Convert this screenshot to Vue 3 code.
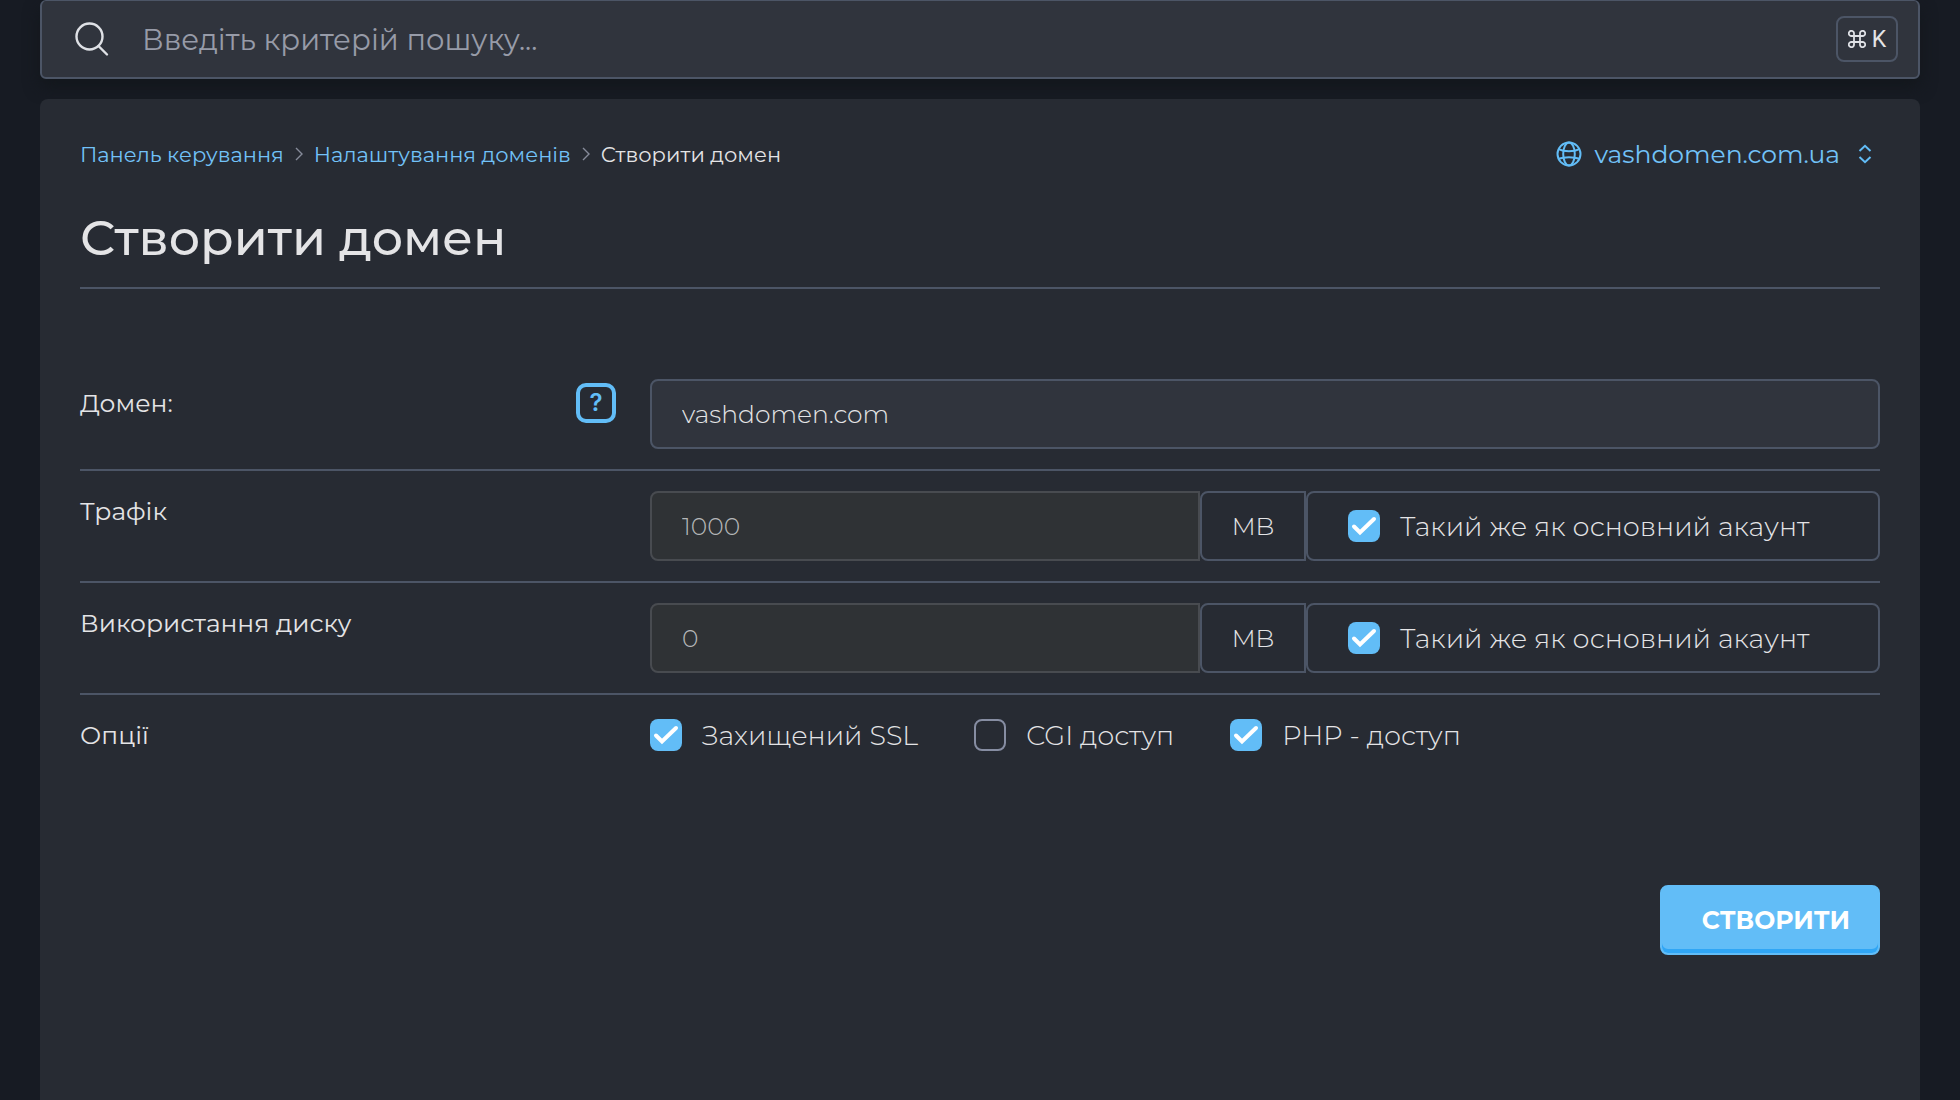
<template>
  <div class="page">
    <form class="search" role="search" @submit.prevent>
      <label for="search" class="search-icon" aria-label="Пошук">
        <svg width="36" height="36" viewBox="0 0 36 36" fill="none" stroke="#dfe1e6" stroke-width="2.4" stroke-linecap="round">
          <circle cx="15.5" cy="15.5" r="13" />
          <path d="M24.5 25 L33 33.500" />
        </svg>
      </label>
      <input id="search" v-model="query" type="text" placeholder="Введіть критерій пошуку..." />
      <kbd class="shortcut">
        <svg width="18" height="18" viewBox="0 0 18 18" fill="none" stroke="#dfe1e6" stroke-width="1.8">
          <path d="M6 6H12V12H6Z M6 6H3.6A2.6 2.6 0 1 1 6 3.6Z M12 6V3.6A2.6 2.6 0 1 1 14.4 6Z M12 12H14.4A2.6 2.6 0 1 1 12 14.4Z M6 12V14.4A2.6 2.6 0 1 1 3.6 12Z" />
        </svg>
        K
      </kbd>
    </form>

    <main class="panel">
      <div class="top">
        <nav class="crumbs">
          <template v-for="crumb in crumbs" :key="crumb">
            <a href="#">{{ crumb }}</a>
            <svg width="8" height="14" viewBox="0 0 8 14" fill="none" stroke="#868b9a" stroke-width="1.4">
              <path d="M1 1L7 7L1 13" />
            </svg>
          </template>
          <span>Створити домен</span>
        </nav>
        <button type="button" class="domain-switch">
          <svg width="26" height="26" viewBox="0 0 26 26" fill="none" stroke="currentColor" stroke-width="2">
            <circle cx="13" cy="13" r="11.5" />
            <ellipse cx="13" cy="13" rx="5.8" ry="11.5" />
            <path d="M2.5 8.2C8 11 18 11 23.5 8.2M2.5 17.8C8 15.6 18 15.6 23.5 17.8" />
          </svg>
          <span>vashdomen.com.ua</span>
          <svg class="updown" width="14" height="20" viewBox="0 0 14 20" fill="none" stroke="currentColor" stroke-width="2">
            <path d="M1.500 7L7 1.800L12.500 7M1.500 13L7 18.200L12.500 13" />
          </svg>
        </button>
      </div>

      <h1>Створити домен</h1>

      <form class="form" @submit.prevent>
        <div class="row">
          <div class="name">
            <label for="domain">Домен:</label>
            <button type="button" class="help">?</button>
          </div>
          <input id="domain" v-model="domain" class="field" type="text" />
        </div>

        <div v-for="limit in limits" :key="limit.id" class="row">
          <div class="name">
            <label :for="limit.id">{{ limit.label }}</label>
          </div>
          <div class="group">
            <input :id="limit.id" v-model="limit.value" class="field" type="text" :disabled="limit.same" />
            <span class="unit">MB</span>
            <label class="check boxed">
              <input v-model="limit.same" type="checkbox" />
              Такий же як основний акаунт
            </label>
          </div>
        </div>

        <div class="row options-row">
          <div class="name" id="options-name">Опції</div>
          <div class="options" role="group" aria-labelledby="options-name">
            <label v-for="option in options" :key="option.label" class="check">
              <input v-model="option.on" type="checkbox" />
              {{ option.label }}
            </label>
          </div>
        </div>

        <div class="actions">
          <button type="submit" class="submit">СТВОРИТИ</button>
        </div>
      </form>
    </main>
  </div>
</template>

<script setup>
import { ref } from 'vue';

const query = ref('');
const domain = ref('vashdomen.com');

const crumbs = ['Панель керування', 'Налаштування доменів'];

const limits = ref([
  { id: 'traffic', label: 'Трафік', value: '1000', same: true },
  { id: 'disk', label: 'Використання диску', value: '0', same: true }
]);

const options = ref([
  { label: 'Захищений SSL', on: true },
  { label: 'CGI доступ', on: false },
  { label: 'PHP - доступ', on: true }
]);
</script>

<style>
html, body {
  margin: 0;
  background: #171b23;
}
</style>

<style scoped>
.page {
  display: flex;
  flex-direction: column;
  gap: 20px;
  min-height: 100vh;
  padding: 0 40px;
  box-sizing: border-box;
  color: #e4e4e6;
  font-family: Montserrat, Inter, sans-serif;
  font-size: 25px;
  font-weight: 400;
}

.page * {
  box-sizing: border-box;
}

input, button, kbd {
  font: inherit;
  color: inherit;
}

a {
  color: #72c2f8;
  text-decoration: none;
}

/* Search bar */
.search {
  display: flex;
  align-items: center;
  height: 79px;
  padding: 0 20px 0 32px;
  background: #30343d;
  border: 2px solid #4c5566;
  border-top-width: 1px;
  border-radius: 6px;
  box-shadow: 0 8px 16px #13171c;
}

.search-icon {
  display: flex;
}

.search input {
  flex: 1;
  min-width: 0;
  padding: 0 32px;
  border: 0;
  outline: 0;
  background: none;
  font-size: 29px;
}

.search input::placeholder {
  color: #979ba8;
  opacity: 1;
}

.shortcut {
  display: flex;
  align-items: center;
  justify-content: center;
  gap: 6px;
  width: 62px;
  height: 46px;
  border: 2px solid #4c5566;
  border-radius: 8px;
  font-family: Roboto, sans-serif;
  font-size: 23px;
}

/* Panel */
.panel {
  flex: 1;
  padding: 35px 40px 40px;
  background: #272b33;
  border-radius: 8px 8px 0 0;
}

.top {
  display: flex;
  align-items: center;
  justify-content: space-between;
  height: 40px;
}

.crumbs {
  display: flex;
  align-items: center;
  gap: 11px;
  font-size: 21px;
}

.domain-switch {
  display: flex;
  align-items: center;
  gap: 12px;
  padding: 0 8px;
  border: 0;
  background: none;
  color: #62bdf7;
}

.domain-switch span {
  color: #72c2f8;
}

.updown {
  margin-left: 6px;
}

h1 {
  margin: 30px 0 0;
  padding-bottom: 15px;
  border-bottom: 2px solid #4c5566;
  font-size: 49px;
  line-height: 68px;
  font-weight: 500;
}

/* Form */
.form {
  padding-top: 70px;
}

.row {
  display: grid;
  grid-template-columns: 536px 1fr;
  column-gap: 34px;
  padding: 20px 0;
  border-bottom: 2px solid #4c5566;
}

.options-row {
  border-bottom: 0;
}

.name {
  display: flex;
  align-items: center;
  justify-content: space-between;
  height: 40px;
}

.row:first-child .name {
  margin-top: 4px;
}

.help {
  width: 40px;
  height: 40px;
  padding: 0;
  border: 4px solid #62bdf7;
  border-radius: 10px;
  background: none;
  color: #62bdf7;
  font-family: Inter, sans-serif;
  font-size: 24px;
  font-weight: 600;
  line-height: 32px;
}

.field {
  width: 100%;
  min-width: 0;
  height: 70px;
  padding: 0 30px;
  border: 2px solid #4c5566;
  border-radius: 8px;
  outline: 0;
  background: #30343d;
  font-weight: 300;
}

.field:disabled {
  border-color: #484b50;
  background: #2f3235;
  color: #b4b6b8;
}

.group {
  display: grid;
  grid-template-columns: 1fr 106px 574px;
}

.group .field {
  border-radius: 8px 0 0 8px;
}

.unit {
  display: flex;
  align-items: center;
  justify-content: center;
  border: 2px solid #4c5566;
  border-radius: 8px 0 0 8px;
  font-weight: 300;
}

.check {
  display: flex;
  align-items: center;
  gap: 20px;
  font-size: 27px;
  font-weight: 300;
  white-space: nowrap;
}

.check input {
  flex: none;
  width: 32px;
  height: 32px;
  margin: 0;
  appearance: none;
  border: 2px solid #868da2;
  border-radius: 8px;
}

.check input:checked {
  border: 0;
  background: #62bdf7 url("data:image/svg+xml,%3Csvg xmlns='http://www.w3.org/2000/svg' viewBox='0 0 32 32' fill='none' stroke='white' stroke-width='4' stroke-linecap='round'%3E%3Cpath d='M6 16.500L12 22.500L26 9'/%3E%3C/svg%3E");
}

.boxed {
  padding: 0 40px;
  border: 2px solid #4c5566;
  border-radius: 8px;
}

.options {
  display: flex;
  gap: 56px;
}

.actions {
  display: flex;
  justify-content: flex-end;
  padding-top: 110px;
}

.submit {
  width: 220px;
  height: 70px;
  padding: 0 0 0 12px;
  border: 2px solid #62bdf7;
  border-radius: 8px;
  background: #62bdf7;
  box-shadow: inset 0 -4px #30a6f5;
  color: #fff;
  font-weight: 700;
}
</style>
